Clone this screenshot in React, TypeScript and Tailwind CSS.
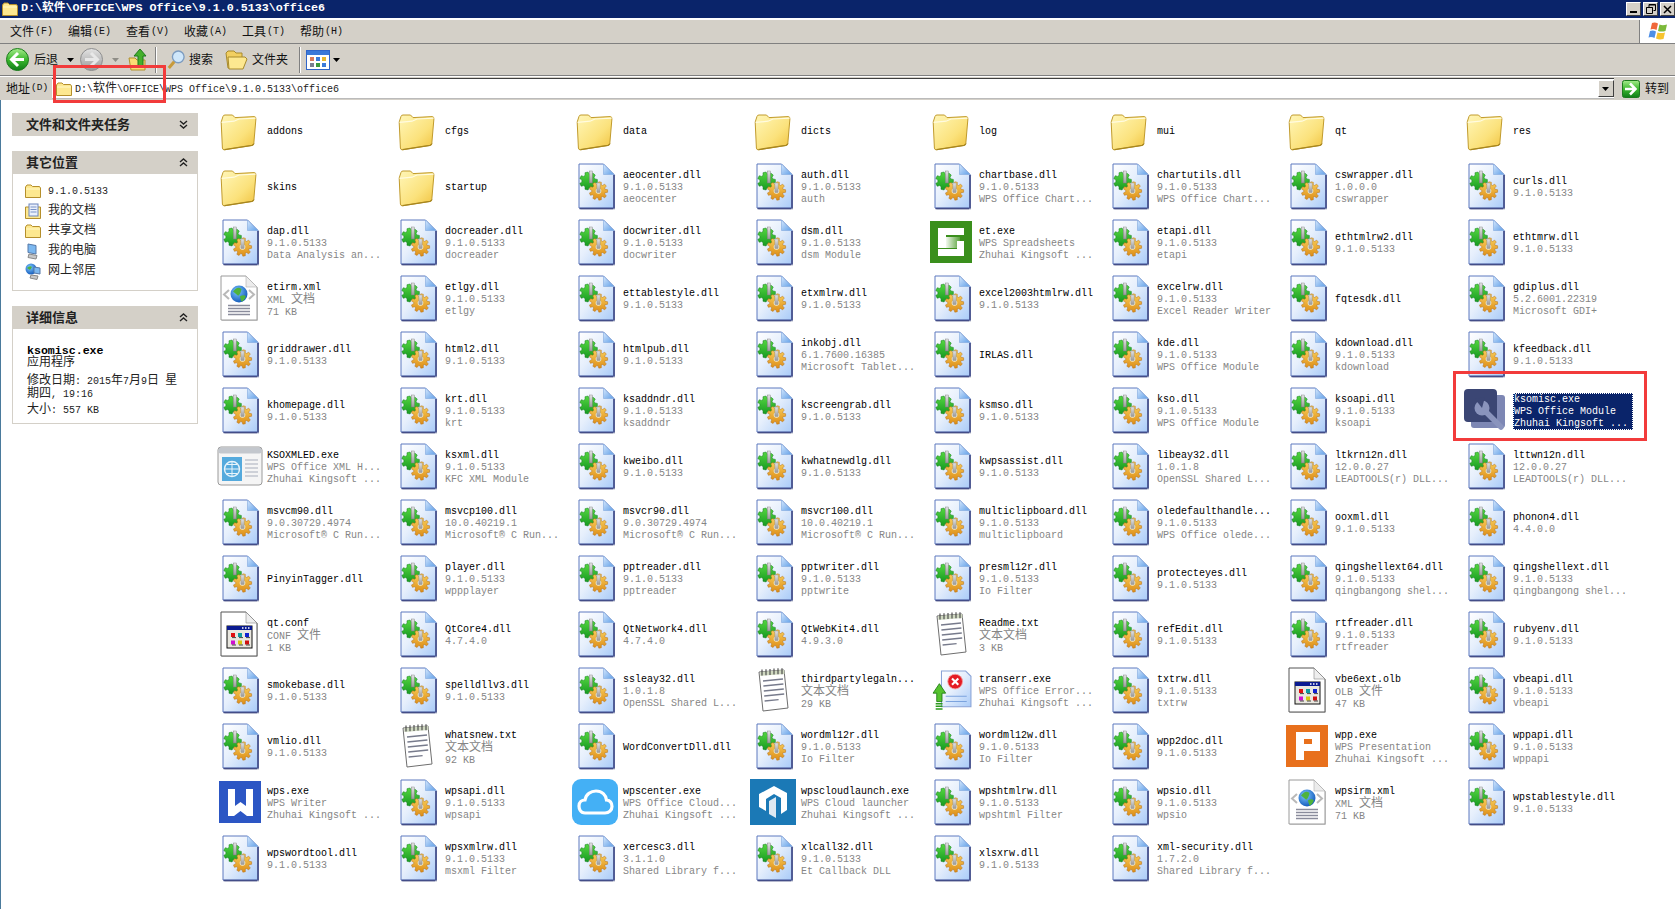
import React from 'react';

const V = '9.1.0.5133';
const Z = 'Zhuhai Kingsoft ...';
const items: string[] = [
  'addons','cfgs','data','dicts','log','mui','qt','res',
  'skins','startup',`aeocenter.dll|${V}|aeocenter`,`auth.dll|${V}|auth`,`chartbase.dll|${V}|WPS Office Chart...`,`chartutils.dll|${V}|WPS Office Chart...`,'cswrapper.dll|1.0.0.0|cswrapper',`curls.dll|${V}`,
  `dap.dll|${V}|Data Analysis an...`,`docreader.dll|${V}|docreader`,`docwriter.dll|${V}|docwriter`,`dsm.dll|${V}|dsm Module`,`et.exe|WPS Spreadsheets|${Z}`,`etapi.dll|${V}|etapi`,`ethtmlrw2.dll|${V}`,`ethtmrw.dll|${V}`,
  'etirm.xml|XML 文档|71 KB',`etlgy.dll|${V}|etlgy`,`ettablestyle.dll|${V}`,`etxmlrw.dll|${V}`,`excel2003htmlrw.dll|${V}`,`excelrw.dll|${V}|Excel Reader Writer`,'fqtesdk.dll','gdiplus.dll|5.2.6001.22319|Microsoft GDI+',
  `griddrawer.dll|${V}`,`html2.dll|${V}`,`htmlpub.dll|${V}`,'inkobj.dll|6.1.7600.16385|Microsoft Tablet...','IRLAS.dll',`kde.dll|${V}|WPS Office Module`,`kdownload.dll|${V}|kdownload`,`kfeedback.dll|${V}`,
  `khomepage.dll|${V}`,`krt.dll|${V}|krt`,`ksaddndr.dll|${V}|ksaddndr`,`kscreengrab.dll|${V}`,`ksmso.dll|${V}`,`kso.dll|${V}|WPS Office Module`,`ksoapi.dll|${V}|ksoapi`,`ksomisc.exe|WPS Office Module|${Z}`,
  `KSOXMLED.exe|WPS Office XML H...|${Z}`,`ksxml.dll|${V}|KFC XML Module`,`kweibo.dll|${V}`,`kwhatnewdlg.dll|${V}`,`kwpsassist.dll|${V}`,'libeay32.dll|1.0.1.8|OpenSSL Shared L...','ltkrn12n.dll|12.0.0.27|LEADTOOLS(r) DLL...','lttwn12n.dll|12.0.0.27|LEADTOOLS(r) DLL...',
  'msvcm90.dll|9.0.30729.4974|Microsoft® C Run...','msvcp100.dll|10.0.40219.1|Microsoft® C Run...','msvcr90.dll|9.0.30729.4974|Microsoft® C Run...','msvcr100.dll|10.0.40219.1|Microsoft® C Run...',`multiclipboard.dll|${V}|multiclipboard`,`oledefaulthandle...|${V}|WPS Office olede...`,`ooxml.dll|${V}`,'phonon4.dll|4.4.0.0',
  'PinyinTagger.dll',`player.dll|${V}|wppplayer`,`pptreader.dll|${V}|pptreader`,`pptwriter.dll|${V}|pptwrite`,`presml12r.dll|${V}|Io Filter`,`protecteyes.dll|${V}`,`qingshellext64.dll|${V}|qingbangong shel...`,`qingshellext.dll|${V}|qingbangong shel...`,
  'qt.conf|CONF 文件|1 KB','QtCore4.dll|4.7.4.0','QtNetwork4.dll|4.7.4.0','QtWebKit4.dll|4.9.3.0','Readme.txt|文本文档|3 KB',`refEdit.dll|${V}`,`rtfreader.dll|${V}|rtfreader`,`rubyenv.dll|${V}`,
  `smokebase.dll|${V}`,`spelldllv3.dll|${V}`,'ssleay32.dll|1.0.1.8|OpenSSL Shared L...','thirdpartylegaln...|文本文档|29 KB',`transerr.exe|WPS Office Error...|${Z}`,`txtrw.dll|${V}|txtrw`,'vbe6ext.olb|OLB 文件|47 KB',`vbeapi.dll|${V}|vbeapi`,
  `vmlio.dll|${V}`,'whatsnew.txt|文本文档|92 KB','WordConvertDll.dll',`wordml12r.dll|${V}|Io Filter`,`wordml12w.dll|${V}|Io Filter`,`wpp2doc.dll|${V}`,`wpp.exe|WPS Presentation|${Z}`,`wppapi.dll|${V}|wppapi`,
  `wps.exe|WPS Writer|${Z}`,`wpsapi.dll|${V}|wpsapi`,`wpscenter.exe|WPS Office Cloud...|${Z}`,`wpscloudlaunch.exe|WPS Cloud launcher|${Z}`,`wpshtmlrw.dll|${V}|wpshtml Filter`,`wpsio.dll|${V}|wpsio`,'wpsirm.xml|XML 文档|71 KB',`wpstablestyle.dll|${V}`,
  `wpswordtool.dll|${V}`,`wpsxmlrw.dll|${V}|msxml Filter`,'xercesc3.dll|3.1.1.0|Shared Library f...',`xlcall32.dll|${V}|Et Callback DLL`,`xlsxrw.dll|${V}`,'xml-security.dll|1.7.2.0|Shared Library f...',
];

function gear(cx: number, cy: number, r: number, teeth = 8) {
  const pts: string[] = [];
  for (let i = 0; i < teeth; i++) {
    const step = (Math.PI * 2) / teeth;
    const a = i * step;
    [[-0.32, r * 0.74], [-0.18, r], [0.18, r], [0.32, r * 0.74]].forEach(([o, rad]) => {
      const t = a + o * step * 1.1;
      pts.push(`${(cx + Math.cos(t) * rad).toFixed(2)},${(cy + Math.sin(t) * rad).toFixed(2)}`);
    });
  }
  return pts.join(' ');
}

const Defs = () => (
  <svg width="0" height="0" className="absolute">
    <defs>
      <linearGradient id="page" x1="0" y1="0" x2="1" y2="1"><stop offset="0" stopColor="#ffffff" /><stop offset="0.45" stopColor="#e6effc" /><stop offset="1" stopColor="#a9cbf8" /></linearGradient>
      <linearGradient id="fold" x1="0" y1="0" x2="1" y2="1"><stop offset="0" stopColor="#d7e8fd" /><stop offset="1" stopColor="#5f9fe8" /></linearGradient>
      <linearGradient id="fld" x1="0" y1="0" x2="1" y2="1"><stop offset="0" stopColor="#fff6b8" /><stop offset="0.6" stopColor="#fbe27c" /><stop offset="1" stopColor="#f0c23f" /></linearGradient>
      <linearGradient id="grn" x1="0" y1="0" x2="0" y2="1"><stop offset="0" stopColor="#a6ec8c" /><stop offset="0.5" stopColor="#3cb82e" /><stop offset="1" stopColor="#0e7d18" /></linearGradient>
      <linearGradient id="gry" x1="0" y1="0" x2="0" y2="1"><stop offset="0" stopColor="#e4e4e4" /><stop offset="1" stopColor="#9a9a9a" /></linearGradient>
      <linearGradient id="org" x1="0" y1="0" x2="0" y2="1"><stop offset="0" stopColor="#f8cf5c" /><stop offset="1" stopColor="#dd8d17" /></linearGradient>
      <linearGradient id="gear2" x1="0" y1="0" x2="0" y2="1"><stop offset="0" stopColor="#55d640" /><stop offset="1" stopColor="#179a22" /></linearGradient>
      <linearGradient id="etfade" x1="0" y1="0" x2="1" y2="0"><stop offset="0" stopColor="#f2f8ee" /><stop offset="1" stopColor="#58a23a" /></linearGradient>
      <radialGradient id="globe" cx="0.4" cy="0.35" r="0.7"><stop offset="0" stopColor="#7fc8ff" /><stop offset="1" stopColor="#0e55b8" /></radialGradient>
    </defs>
  </svg>
);

const Page = ({ children }: { children?: React.ReactNode }) => (
  <svg width="38" height="47" viewBox="0 0 38 47" className="block">
    <path d="M2.5 2.5H27L37 12.5V46.5H2.5Z" fill="#9aa0b5" opacity="0.7" />
    <path d="M1 1H25.5L36 11.5V45H1Z" fill="url(#page)" stroke="#5d78bf" strokeWidth="1" />
    <path d="M35 45.5H1.5M36 12V45.5" stroke="#434d88" strokeWidth="1.6" fill="none" />
    <path d="M25.5 1V11.5H36Z" fill="url(#fold)" stroke="#7fa7de" strokeWidth="0.6" />
    {children}
  </svg>
);

const Dll = () => (
  <Page>
    <polygon points={gear(10.5, 18, 9, 7)} fill="url(#gear2)" stroke="#117a1a" strokeWidth="0.5" />
    <polygon points={gear(20.5, 28, 9.2, 9)} fill="url(#org)" stroke="#b76e10" strokeWidth="0.5" />
    <circle cx="20.5" cy="28" r="2.8" fill="#f6f0d8" />
    <rect x="11.2" y="8" width="3.2" height="12" fill="url(#gry)" stroke="#777" strokeWidth="0.4" />
    <rect x="18.9" y="20" width="3.2" height="9.5" fill="url(#gry)" stroke="#888" strokeWidth="0.4" />
  </Page>
);

const Folder = () => (
  <svg width="37" height="37" viewBox="0 0 37 37" className="-ml-[4px] mt-1 block">
    <path d="M1.2 8L3 2.4Q3.4 1 5 1H12.5L15 3.6L34 2.6Q36.2 2.6 35.9 5L33.8 29.5Q33.6 31 32 31.4L4.4 35.8Q2.6 36 2.4 34Z" fill="url(#fld)" stroke="#c19b2d" strokeWidth="1" />
    <path d="M1.6 8.4L14 7.2L19 5L35.6 4.2" fill="none" stroke="#fffbe0" strokeWidth="1.2" />
    <path d="M4.4 35.6L32 31.4Q33.6 31 33.8 29.5" fill="none" stroke="#a7861f" strokeWidth="1.4" />
  </svg>
);

const Globe = ({ cx, cy, r }: { cx: number; cy: number; r: number }) => (
  <>
    <circle cx={cx} cy={cy} r={r} fill="url(#globe)" />
    <path d={`M${cx - r * 0.7} ${cy - r * 0.3}q${r * 0.5} ${-r * 0.7} ${r} ${-r * 0.3}q${-r * 0.1} ${r * 0.6} ${-r * 0.4} ${r * 0.8}zM${cx + r * 0.1} ${cy + r * 0.3}q${r * 0.5} ${-r * 0.3} ${r * 0.7} 0q${-r * 0.2} ${r * 0.5} ${-r * 0.5} ${r * 0.6}z`} fill="#4fb33c" />
  </>
);

const Xml = () => (
  <svg width="39" height="47" viewBox="0 0 39 47" className="block -ml-[3px]">
    <path d="M2 2H27L38 13V46H2Z" fill="#b5b5b5" opacity="0.6" />
    <path d="M1 1H26L37 12V45H1Z" fill="#fff" stroke="#9a9a9a" />
    <path d="M26 1V12H37Z" fill="#ececec" stroke="#b0b0b0" strokeWidth="0.6" />
    <path d="M9 15L4 19.5L9 24M29 15L34 19.5L29 24" fill="none" stroke="#b9b9b9" strokeWidth="2" />
    <Globe cx={19} cy={19} r={8.5} />
    <path d="M8 30.5H30M8 33.5H30M8 36.5H30M8 39.5H30" stroke="#8a8c9c" strokeWidth="1.3" />
  </svg>
);

const Conf = () => (
  <svg width="39" height="47" viewBox="0 0 39 47" className="block -ml-[3px]">
    <path d="M2 2H27L38 13V46H2Z" fill="#aaa" opacity="0.5" />
    <path d="M1 1H26L37 12V45H1Z" fill="#fff" stroke="#555" />
    <path d="M26 1V12H37Z" fill="#eee" stroke="#888" strokeWidth="0.6" />
    <rect x="7" y="15" width="25" height="22" fill="#e9e7df" stroke="#111" strokeWidth="1" />
    <rect x="7" y="15" width="25" height="4" fill="#0a1a90" />
    <path d="M22 17h1.5M25 17h1.5M28 17h1.5" stroke="#fff" strokeWidth="1.4" />
    <rect x="11" y="22" width="4" height="4" fill="#e01010" /><rect x="18" y="22" width="4" height="4" fill="#0f9aa0" /><rect x="25" y="22" width="4" height="4" fill="#1020d0" />
    <rect x="11" y="29.5" width="4" height="4" fill="#d010d0" /><rect x="18" y="29.5" width="4" height="4" fill="#d8c810" /><rect x="25" y="29.5" width="4" height="4" fill="#d01010" />
    <path d="M12 26.6h4M19 26.6h4M26 26.6h4M12 34h4M19 34h4M26 34h4" stroke="#333" strokeWidth="0.9" />
  </svg>
);

const Txt = () => (
  <svg width="34" height="44" viewBox="0 0 34 44" className="block -ml-[3px]">
    <path d="M3 4L28 2L32 40L7 43Z" fill="#fff" stroke="#6f6f6f" strokeWidth="1" />
    <path d="M4 4l24-2l.4 4l-24 2z" fill="#cfd8c0" />
    <path d="M6 1.5v6M10 1.2v6M14 .9v6M18 .6v6M22 .3v6M26 .3v6" stroke="#444" strokeWidth="1.1" />
    <path d="M7 13l20-2M7.4 18l20-2M7.8 23l20-2M8.2 28l20-2M8.6 33l14-1.4" stroke="#777b8c" strokeWidth="1.3" />
  </svg>
);

const Et = () => (
  <svg width="42" height="42" viewBox="0 0 42 42" className="-ml-[4px] block"><rect width="42" height="42" fill="#3a8f1c" />
    <rect x="16" y="16" width="14" height="11" fill="url(#etfade)" />
    <path d="M8 7H34V14H16V27H8Z" fill="#fff" />
    <path d="M8 28H27V20H34V35H8Z" fill="#fff" />
  </svg>
);
const Wpp = () => (
  <svg width="42" height="42" viewBox="0 0 42 42" className="-ml-[4px] block"><rect width="42" height="42" fill="#e8701c" />
    <path fillRule="evenodd" d="M10 7H34V26H18V35H10ZM18 14V19H26V14Z" fill="#fff" />
  </svg>
);
const Wps = () => (
  <svg width="42" height="42" viewBox="0 0 42 42" className="-ml-[2px] block"><rect width="42" height="42" fill="#2c56c4" />
    <path d="M9 8H16V25L21.500 21L27 25V8H34V35H28L21.500 30L15 35H9Z" fill="#fff" />
  </svg>
);
const Cloud = () => (
  <svg width="46" height="46" viewBox="0 0 46 46" className="-ml-[4px] block"><rect width="46" height="46" rx="9" fill="#44b0f5" />
    <path d="M13 34C8 34 7 29 7 27C7 23 10 21 13 21C14 15 19 12 24 12C30 12 34 16 34.500 21C38 21.500 40 24 40 27.500C40 31 37 34 33 34Z" fill="none" stroke="#fff" strokeWidth="3.2" />
  </svg>
);
const Launch = () => (
  <svg width="46" height="46" viewBox="0 0 46 46" className="-ml-[4px] block"><rect width="46" height="46" fill="#1b79b6" />
    <path d="M9 15L24 7L37 14V31L31 35V19L24 15L16 20V32L9 28Z" fill="#fff" />
    <path d="M19 22L26 18V39L19 35Z" fill="#dfe9f2" />
  </svg>
);
const Misc = () => (
  <svg width="42" height="42" viewBox="0 0 42 42" className="-ml-[4px] block">
    <rect x="7" y="6" width="34" height="33" rx="3" fill="#7d87b4" />
    <rect x="0" y="0" width="33" height="33" rx="4" fill="#3b4674" />
    <path d="M19 20L37 38" stroke="#8a94bd" strokeWidth="5.500" strokeLinecap="round" />
    <circle cx="18" cy="19" r="7.500" fill="#8a94bd" />
    <path d="M18 19L11 10L21 8Z" fill="#3b4674" />
  </svg>
);
const Xmled = () => (
  <svg width="46" height="40" viewBox="0 0 46 40" className="-ml-[2px] block">
    <rect x="1" y="1" width="44" height="38" rx="3" fill="#f5f5f5" stroke="#9a9a9a" />
    <rect x="1.500" y="1.500" width="43" height="6" rx="2" fill="#c3c7cd" />
    <rect x="5" y="11" width="20" height="24" fill="#55aadd" />
    <circle cx="15" cy="23" r="7.500" fill="none" stroke="#e8f4fb" strokeWidth="1.400" />
    <path d="M7.500 23H22.500M15 15.500V30.500M10 18.500H20M10 27.500H20" stroke="#e8f4fb" strokeWidth="1" />
    <path d="M28 14H41M28 18H41M28 22H41M28 26H41M28 30H41" stroke="#a8aebc" strokeWidth="1.200" />
  </svg>
);
const Err = () => (
  <svg width="40" height="40" viewBox="0 0 38 38" className="block -ml-[2px]">
    <path d="M9 1H32L37 6V35H9Z" fill="url(#page)" stroke="#8aa3d6" />
    <path d="M13 25H33M13 30H33" stroke="#7ba3de" strokeWidth="1" />
    <circle cx="22" cy="11" r="7" fill="#e41b23" stroke="#f4a0a0" strokeWidth="0.8" />
    <path d="M19 8L25 14M25 8L19 14" stroke="#fff" strokeWidth="2" />
    <path d="M7 13L13 22H9.500V30H4.500V22H1Z" fill="#55c22e" stroke="#1b7a12" strokeWidth="0.8" />
    <path d="M3.500 32H10M3.500 34.500H10M3.500 37H10" stroke="#2d9a1e" strokeWidth="1.500" />
  </svg>
);

const iconFor = (name: string, i: number) => {
  if (i < 10) return <Folder />;
  if (name === 'et.exe') return <Et />;
  if (name === 'wpp.exe') return <Wpp />;
  if (name === 'wps.exe') return <Wps />;
  if (name === 'wpscenter.exe') return <Cloud />;
  if (name === 'wpscloudlaunch.exe') return <Launch />;
  if (name === 'ksomisc.exe') return <Misc />;
  if (name === 'KSOXMLED.exe') return <Xmled />;
  if (name === 'transerr.exe') return <Err />;
  if (name.endsWith('.xml') ) return <Xml />;
  if (name === 'qt.conf' || name.endsWith('.olb')) return <Conf />;
  if (name.endsWith('.txt') || name.startsWith('thirdparty')) return <Txt />;
  return <Dll />;
};

const Cjk = ({ text }: { text: string }) => (
  <>
    {text.split(/([\u4e00-\u9fff]+)/).map((s, i) =>
      /[\u4e00-\u9fff]/.test(s) ? <span key={i} className="text-[12px] leading-[12px]">{s}</span> : <span key={i}>{s}</span>
    )}
  </>
);

const Item = ({ spec, i }: { spec: string; i: number }) => {
  const [name, a, b] = spec.split('|');
  const sel = name === 'ksomisc.exe';
  return (
    <div className="flex h-[56px] w-[178px] items-center">
      <div className="flex w-[53px] shrink-0 items-center justify-center">{iconFor(name, i)}</div>
      <div className={sel
        ? "mt-[2px] h-[37px] w-[120px] border border-dotted border-white bg-[#0a246a] text-[10px] leading-[12px] text-white whitespace-nowrap font-['Liberation_Mono','Noto_Sans_CJK_SC',monospace]"
        : "mt-[4px] text-[10px] leading-[12px] text-black whitespace-nowrap font-['Liberation_Mono','Noto_Sans_CJK_SC',monospace]"}>
        <div>{name}</div>
        {a ? <div className={sel ? '' : 'text-[#858585]'}><Cjk text={a} /></div> : null}
        {b ? <div className={sel ? '' : 'text-[#858585]'}><Cjk text={b} /></div> : null}
      </div>
    </div>
  );
};

const Arrow = ({ dim = false }: { dim?: boolean }) => (
  <svg width="7" height="4" viewBox="0 0 7 4" className="block"><path d="M0 0H7L3.500 4Z" fill={dim ? '#8f8d86' : '#000'} /></svg>
);

const Round = ({ on }: { on: boolean }) => (
  <svg width="23" height="23" viewBox="0 0 23 23" className="block">
    <circle cx="11.500" cy="11.500" r="11" fill={on ? 'url(#grn)' : 'url(#gry)'} stroke={on ? '#1c7a1c' : '#8e8e8e'} />
    <path d={on ? 'M12 5L5.500 11.500L12 18M6 11.500H18' : 'M11 5L17.500 11.500L11 18M17 11.500H5'} fill="none" stroke={on ? '#fff' : '#e8e8e8'} strokeWidth="3" />
  </svg>
);

const SmallFolder = () => (
  <svg width="16" height="14" viewBox="0 0 16 14" className="block"><path d="M.5 3L2 1H6L7.500 2.500H14.500L15.500 4V13.500H.5Z" fill="#fde890" stroke="#b58f2c" /><path d="M1 5H15" stroke="#fff8c8" /></svg>
);
const SmallDoc = () => (
  <svg width="16" height="16" viewBox="0 0 16 16" className="block"><path d="M.5 4H15.500V15.500H.5Z" fill="#fde890" stroke="#b58f2c" /><rect x="4" y="1" width="9" height="12" fill="#eaf0fb" stroke="#6d86bd" /><path d="M5.500 4H11.500M5.500 6.500H11.500M5.500 9H11.500" stroke="#7a93c8" /></svg>
);
const SmallPc = () => (
  <svg width="14" height="17" viewBox="0 0 14 17" className="block"><path d="M3 1L11 2.500V11L3 9.500Z" fill="#7cb8f0" stroke="#5578a8" /><path d="M4 11L12 12.500L11 16L3 14.500Z" fill="#c8c8c8" stroke="#888" /></svg>
);
const SmallNet = () => (
  <svg width="17" height="17" viewBox="0 0 17 17" className="block"><circle cx="6" cy="6" r="5.500" fill="url(#globe)" /><path d="M2 5q3-3 5-1l-2 3z" fill="#4fb33c" /><path d="M9 4L15 5V11L9 10Z" fill="#7cb8f0" stroke="#5578a8" /><path d="M6 12L13 13L12 16.500L5 15Z" fill="#c8c8c8" stroke="#888" /></svg>
);

const Chevrons = ({ up }: { up: boolean }) => (
  <svg width="9" height="9" viewBox="0 0 9 9" className="block">
    <path d={up ? 'M1 4L4.500 1L8 4M1 8L4.500 5L8 8' : 'M1 1L4.500 4L8 1M1 5L4.500 8L8 5'} fill="none" stroke="#222" strokeWidth="1.400" />
  </svg>
);

const CardHead = ({ title, up }: { title: string; up: boolean }) => (
  <div className="flex h-[23px] items-center justify-between bg-[#d4d0c8] pl-[14px] pr-[10px]">
    <span className="text-[13px] font-bold text-[#222]">{title}</span>
    <Chevrons up={up} />
  </div>
);

const WinBtn = ({ children }: { children: React.ReactNode }) => (
  <div className="flex h-[14px] w-[15px] items-center justify-center border-t border-l border-t-white border-l-white border-b border-r border-b-[#404040] border-r-[#404040] bg-[#d4d0c8]">{children}</div>
);

const Menu = ({ cn, k }: { cn: string; k: string }) => (
  <div className="flex w-[58px] items-center text-[12px] text-[#111]">{cn}<span className="ml-[1px] font-['Liberation_Mono',monospace] text-[10px]">({k})</span></div>
);

const Flag = () => (
  <svg width="20" height="19" viewBox="0 0 20 19" className="block">
    <path d="M4 1Q7 0 10 1.500L8.500 8Q5.500 6.500 2.500 7.500Z" fill="#f0673a" />
    <path d="M11.500 2.500Q14.500 4 19 2.500L17.500 9Q13.500 10 10 9Z" fill="#7cb93a" />
    <path d="M2 9Q5 8 8 9.500L6.500 16Q3.500 14.500 .5 15.500Z" fill="#4e8fe6" />
    <path d="M9.500 10.500Q13 11.500 17 10.500L15.500 17Q11.500 18 8 16.500Z" fill="#f7c32e" />
  </svg>
);

export default function App() {
  return (
    <div className="relative flex h-[909px] w-[1675px] flex-col overflow-hidden bg-white font-['Liberation_Sans','Noto_Sans_CJK_SC',sans-serif]">
      <Defs />
      {/* Title bar */}
      <div className="flex h-[18px] shrink-0 items-center bg-[#0a246a] pl-[2px] pr-0">
        <SmallFolder />
        <span className="ml-[3px] text-[11.7px] font-bold text-white font-['Liberation_Mono','Noto_Sans_CJK_SC',monospace]">{'D:\\软件\\OFFICE\\WPS Office\\9.1.0.5133\\office6'}</span>
        <div className="ml-auto flex items-center gap-[2px]">
          <WinBtn><div className="mt-[6px] h-[2px] w-[7px] bg-black" /></WinBtn>
          <WinBtn>
            <svg width="10" height="10" viewBox="0 0 10 10"><path d="M3 .5H9.500V6.500H7.500M.5 3.500H6.500V9.500H.5ZM.5 3.500H6.500M3 .5V3M3 1H9.500" fill="none" stroke="#000" /></svg>
          </WinBtn>
          <WinBtn>
            <svg width="9" height="9" viewBox="0 0 9 9"><path d="M1 1L8 8M8 1L1 8" stroke="#000" strokeWidth="1.500" /></svg>
          </WinBtn>
        </div>
      </div>

      {/* Menu */}
      <div className="mt-[1px] flex h-[25px] shrink-0 border-t border-t-white border-b border-b-[#808080] bg-[#d4d0c8] pl-[10px]">
        <Menu cn="文件" k="F" /><Menu cn="编辑" k="E" /><Menu cn="查看" k="V" /><Menu cn="收藏" k="A" /><Menu cn="工具" k="T" /><Menu cn="帮助" k="H" />
        <div className="ml-auto flex h-full w-[36px] items-center justify-center border-l border-l-[#808080] bg-white"><Flag /></div>
      </div>

      {/* Toolbar */}
      <div className="flex h-[32px] shrink-0 items-center border-b border-b-[#808080] bg-[#d4d0c8] pl-[6px] text-[12px] text-[#111]">
        <Round on />
        <span className="ml-[5px]">后退</span>
        <div className="ml-[9px]"><Arrow /></div>
        <div className="ml-[6px]"><Round on={false} /></div>
        <div className="ml-[9px]"><Arrow dim /></div>
        <svg width="20" height="24" viewBox="0 0 20 24" className="ml-[9px] block">
          <path d="M1 10H7L9 12H17V22H3Z" fill="#fbdc74" stroke="#b0902c" />
          <path d="M12 1L18 8H15V18H10V8H6Z" fill="#45b02c" stroke="#1c7a1c" />
        </svg>
        <div className="ml-[7px] h-[26px] w-[2px] border-l border-l-[#808080] border-r border-r-white" />
        <svg width="18" height="22" viewBox="0 0 20 22" className="ml-[10px] block">
          <circle cx="12.500" cy="7.500" r="6.500" fill="#cfe7fb" stroke="#7d9cc0" strokeWidth="1.500" />
          <path d="M8 13L2 20" stroke="#c79a3a" strokeWidth="3.400" />
        </svg>
        <span className="ml-[4px]">搜索</span>
        <svg width="23" height="20" viewBox="0 0 23 20" className="ml-[12px] block">
          <path d="M1 3L3 1H9L11 3H17V18H3Z" fill="#f2cf61" stroke="#a88a2c" />
          <path d="M3 7H20L22 9L18 19H4Z" fill="#fde890" stroke="#a88a2c" />
        </svg>
        <span className="ml-[4px]">文件夹</span>
        <div className="ml-[11px] h-[26px] w-[2px] border-l border-l-[#808080] border-r border-r-white" />
        <svg width="24" height="20" viewBox="0 0 24 20" className="ml-[5px] block">
          <rect x=".5" y=".5" width="23" height="19" fill="#fff" stroke="#2f65c8" />
          <rect x="1" y="1" width="22" height="4" fill="#3a78d8" />
          <rect x="4" y="7" width="4" height="4" fill="#d97a5a" /><rect x="10" y="7" width="4" height="4" fill="#3b7ad8" /><rect x="16" y="7" width="4" height="4" fill="#e8b82e" />
          <rect x="4" y="13" width="4" height="4" fill="#7a7f90" /><rect x="10" y="13" width="4" height="4" fill="#3c9a3c" /><rect x="16" y="13" width="4" height="4" fill="#3b7ad8" />
        </svg>
        <div className="ml-[3px]"><Arrow /></div>
      </div>

      {/* Address bar */}
      <div className="flex h-[24px] shrink-0 items-center border-t border-t-white bg-[#d4d0c8] pl-[6px] text-[12px] text-[#111]">
        <div className="flex w-[46px] items-center">地址<span className="ml-[1px] font-['Liberation_Mono',monospace] text-[9.5px]">(D)</span></div>
        <div className="flex h-[21px] flex-1 items-center border-t border-t-[#404040] border-b border-b-[#bbb] bg-white pl-[4px]">
          <SmallFolder />
          <span className="ml-[3px] text-[10px] text-[#222] font-['Liberation_Mono','Noto_Sans_CJK_SC',monospace]">D:\<span className="text-[12px]">软件</span>{'\\OFFICE\\WPS Office\\9.1.0.5133\\office6'}</span>
          <div className="ml-auto flex h-[17px] w-[16px] items-center justify-center border border-t-white border-l-white border-b-[#404040] border-r-[#404040] bg-[#d4d0c8]"><Arrow /></div>
        </div>
        <div className="ml-[8px] flex items-center pr-[6px]">
          <svg width="18" height="18" viewBox="0 0 18 18" className="block">
            <rect x=".5" y=".5" width="17" height="17" rx="2" fill="url(#grn)" stroke="#1c7a1c" />
            <path d="M8 3.500L13.500 9L8 14.500M13 9H3" fill="none" stroke="#fff" strokeWidth="2.500" />
          </svg>
          <span className="ml-[5px]">转到</span>
        </div>
      </div>

      {/* Body */}
      <div className="flex min-h-0 flex-1 border-l border-l-[#4a7a9c]">
        <aside className="flex w-[213px] shrink-0 flex-col pl-[11px] pt-[13px]">
          <div className="w-[186px]">
            <CardHead title="文件和文件夹任务" up={false} />
            <div className="mt-[15px]">
              <CardHead title="其它位置" up />
              <div className="flex h-[117px] flex-col border-x border-b border-[#d4d0c8] pl-[12px] pt-[7px] text-[10px] text-[#222] font-['Liberation_Mono','Noto_Sans_CJK_SC',monospace]">
                {[
                  [<SmallFolder key="a" />, '9.1.0.5133'],
                  [<SmallDoc key="b" />, '我的文档'],
                  [<SmallFolder key="c" />, '共享文档'],
                  [<SmallPc key="d" />, '我的电脑'],
                  [<SmallNet key="e" />, '网上邻居'],
                ].map(([ic, t], i) => (
                  <div key={i} className="flex h-[20px] items-center">
                    <div className="flex w-[23px] justify-start">{ic}</div>
                    <span><Cjk text={t as string} /></span>
                  </div>
                ))}
              </div>
            </div>
            <div className="mt-[15px]">
              <CardHead title="详细信息" up />
              <div className="flex h-[95px] flex-col border-x border-b border-[#d4d0c8] pl-[14px] pt-[16px] text-[10px] leading-[12px] text-[#222] font-['Liberation_Mono','Noto_Sans_CJK_SC',monospace]">
                <div className="text-[11.6px] font-bold text-black">ksomisc.exe</div>
                <div><Cjk text="应用程序" /></div>
                <div className="mt-[5px]"><Cjk text="修改日期: 2015年7月9日 星" /></div>
                <div><Cjk text="期四, 19:16" /></div>
                <div className="mt-[3px]"><Cjk text="大小: 557 KB" /></div>
              </div>
            </div>
          </div>
        </aside>
        <main className="grid flex-1 grid-cols-[repeat(8,178px)] content-start pt-[2px]">
          {items.map((s, i) => <Item key={i} spec={s} i={i} />)}
        </main>
      </div>

      {/* Red annotation frames */}
      <div className="absolute left-[53px] top-[65px] h-[38px] w-[113px] border-[3px] border-[#f23b3b]" />
      <div className="absolute left-[1453px] top-[371px] h-[70px] w-[194px] border-[3px] border-[#f23b3b]" />
    </div>
  );
}
